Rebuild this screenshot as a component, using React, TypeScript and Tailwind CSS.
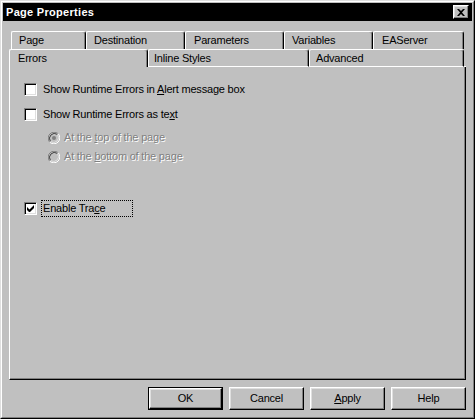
import type { ReactNode } from "react";

const raised =
  "border border-t-white border-l-white border-r-black border-b-black shadow-[inset_-1px_-1px_0_#808080,inset_1px_1px_0_#dfdfdf]";

function Tab({
  width,
  label,
  pad = 7,
  selected = false,
  front = false,
}: {
  width: number;
  label: string;
  pad?: number;
  selected?: boolean;
  front?: boolean;
}) {
  return (
    <div
      style={{ width, paddingLeft: pad }}
      className={`flex h-[18px] items-center rounded-tl-[2px] rounded-tr-[3px] border-t border-l border-r border-t-white border-l-white border-r-black shadow-[inset_-1px_0_0_#808080] ${
        front && !selected ? "border-b border-b-white" : "border-b-0"
      }`}
    >
      {label}
    </div>
  );
}

function Checkbox({ checked = false }: { checked?: boolean }) {
  return (
    <div className="flex h-[13px] w-[13px] shrink-0 items-center justify-center border border-t-[#808080] border-l-[#808080] border-r-white border-b-white bg-white shadow-[inset_1px_1px_0_#000,inset_-1px_-1px_0_#dfdfdf]">
      {checked && (
        <svg width="7" height="7" viewBox="0 0 7 7">
          <path d="M0 2v3l2 2h1l4-4V0L2.5 4.5z" fill="#000" />
        </svg>
      )}
    </div>
  );
}

function Radio({ dot = false }: { dot?: boolean }) {
  return (
    <svg width="12" height="12" viewBox="0 0 12 12" className="shrink-0">
      <circle cx="6" cy="6" r="5" fill="#c0c0c0" />
      <path d="M1.76 10.24A6 6 0 0 1 10.24 1.76" stroke="#808080" fill="none" strokeWidth="1" />
      <path d="M2.5 9.5A5 5 0 0 1 9.5 2.5" stroke="#404040" fill="none" strokeWidth="1" />
      <path d="M10.24 1.76A6 6 0 0 1 1.76 10.24" stroke="#fff" fill="none" strokeWidth="1" />
      <path d="M9.5 2.5A5 5 0 0 1 2.5 9.5" stroke="#dfdfdf" fill="none" strokeWidth="1" />
      {dot && <circle cx="6" cy="6" r="2" fill="#808080" />}
    </svg>
  );
}

function Label({
  children,
  focus = false,
  disabled = false,
  width,
}: {
  children: ReactNode;
  focus?: boolean;
  disabled?: boolean;
  width?: number;
}) {
  return (
    <span
      style={width ? { width } : undefined}
      className={`flex h-[17px] items-center border px-px leading-none ${
        focus ? "border-dotted border-black" : "border-transparent"
      } ${disabled ? "text-[#808080] [text-shadow:1px_1px_0_#fff]" : "text-black"}`}
    >
      <span className="whitespace-pre">{children}</span>
    </span>
  );
}

function Button({ children, isDefault = false }: { children: ReactNode; isDefault?: boolean }) {
  return (
    <div className={`h-[23px] w-[75px] ${isDefault ? "border border-black" : ""}`}>
      <div className={`flex h-full w-full items-center justify-center ${raised}`}>{children}</div>
    </div>
  );
}

export default function App() {
  return (
    <div className="h-[419px] w-[475px] border border-t-[#dfdfdf] border-l-[#dfdfdf] border-r-black border-b-black bg-[#c0c0c0] font-['Liberation_Sans',Arial,sans-serif] text-[11px] tracking-[-0.2px] text-black">
      <div className="flex h-full flex-col border border-t-white border-l-white border-r-[#808080] border-b-[#808080] p-px">
        <div className="flex h-[18px] items-center justify-between bg-black pl-[3px] pr-[3px]">
          <span className="text-[11px] font-bold tracking-[0.3px] text-white">Page Properties</span>
          <div className={`flex h-[14px] w-[16px] items-center justify-center bg-[#c0c0c0] ${raised}`}>
            <svg width="8" height="7" viewBox="0 0 8 7">
              <path d="M0 0h2l2 2 2-2h2L5 3.5 8 7H6L4 5 2 7H0l3-3.5z" fill="#000" />
            </svg>
          </div>
        </div>

        <div className="flex flex-1 flex-col px-[6px] pt-[10px] pb-[6px]">
          <div className="ml-[2px] flex">
            <Tab width={75} label="Page" />
            <Tab width={99} label="Destination" />
            <Tab width={99} label="Parameters" pad={8} />
            <Tab width={89} label="Variables" />
            <Tab width={91} label="EAServer" pad={8} />
          </div>
          <div className="flex">
            <Tab width={139} label="Errors" pad={8} selected front />
            <Tab width={161} label="Inline Styles" pad={5} front />
            <Tab width={155} label="Advanced" pad={6} front />
            <div className="h-[18px] w-[2px] border-b border-b-white" />
          </div>

          <div className="flex h-[313px] flex-col border-l border-r border-b border-l-white border-r-black border-b-black pl-[14px] pt-[14px] shadow-[inset_-1px_-1px_0_#808080]">
            <div className="flex h-[17px] items-center gap-[4px]">
              <Checkbox />
              <Label>
                Show Runtime Errors in <u className="underline-offset-1">A</u>lert message box
              </Label>
            </div>
            <div className="mt-[8px] flex h-[17px] items-center gap-[4px]">
              <Checkbox />
              <Label>
                Show Runtime Errors as te<u className="underline-offset-1">x</u>t
              </Label>
            </div>
            <div className="ml-[24px] mt-[6px] flex h-[17px] items-center gap-[2px]">
              <Radio dot />
              <Label disabled>
                At the <u className="underline-offset-1">t</u>op of the page
              </Label>
            </div>
            <div className="ml-[24px] mt-[2px] flex h-[17px] items-center gap-[2px]">
              <Radio />
              <Label disabled>
                At the <u className="underline-offset-1">b</u>ottom of the page
              </Label>
            </div>
            <div className="mt-[35px] flex h-[17px] items-center gap-[4px]">
              <Checkbox checked />
              <Label focus width={92}>
                Enable Tra<u className="underline-offset-1">c</u>e
              </Label>
            </div>
          </div>

          <div className="mt-[7px] flex justify-end gap-[6px]">
            <Button isDefault>OK</Button>
            <Button>Cancel</Button>
            <Button>
              <span>
                <u className="underline-offset-1">A</u>pply
              </span>
            </Button>
            <Button>Help</Button>
          </div>
        </div>
      </div>
    </div>
  );
}
